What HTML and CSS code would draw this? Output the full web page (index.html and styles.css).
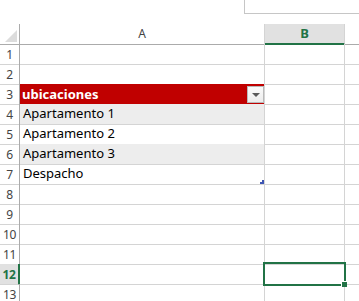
FILE: index.html
```html
<!DOCTYPE html>
<html>
<head>
<meta charset="utf-8">
<link rel="stylesheet" href="styles.css">
</head>
<body>
<div class="top">
  <div class="formula-box"></div>
</div>
<div class="sheet">
  <div class="row head-row">
    <div class="rh corner"><span class="tri"></span></div>
    <div class="ch">A</div>
    <div class="ch ch-sel">B</div>
    <div class="ch ch-last"></div>
  </div>
  <div class="row"><div class="rh">1</div><div class="c ca"></div><div class="c cb"></div><div class="c cc"></div></div>
  <div class="row"><div class="rh">2</div><div class="c ca"></div><div class="c cb"></div><div class="c cc"></div></div>
  <div class="row"><div class="rh">3</div><div class="c ca tbl-head"><span>ubicaciones</span><span class="dd"><span class="dd-arrow"></span></span></div><div class="c cb"></div><div class="c cc"></div></div>
  <div class="row"><div class="rh">4</div><div class="c ca band">Apartamento 1</div><div class="c cb"></div><div class="c cc"></div></div>
  <div class="row"><div class="rh">5</div><div class="c ca">Apartamento 2</div><div class="c cb"></div><div class="c cc"></div></div>
  <div class="row"><div class="rh">6</div><div class="c ca band">Apartamento 3</div><div class="c cb"></div><div class="c cc"></div></div>
  <div class="row"><div class="rh">7</div><div class="c ca tbl-end">Despacho<span class="resize"></span></div><div class="c cb"></div><div class="c cc"></div></div>
  <div class="row"><div class="rh">8</div><div class="c ca"></div><div class="c cb"></div><div class="c cc"></div></div>
  <div class="row"><div class="rh">9</div><div class="c ca"></div><div class="c cb"></div><div class="c cc"></div></div>
  <div class="row"><div class="rh">10</div><div class="c ca"></div><div class="c cb"></div><div class="c cc"></div></div>
  <div class="row"><div class="rh">11</div><div class="c ca"></div><div class="c cb"></div><div class="c cc"></div></div>
  <div class="row"><div class="rh rh-sel">12</div><div class="c ca"></div><div class="c cb selected"><span class="fill-handle"></span></div><div class="c cc"></div></div>
  <div class="row"><div class="rh">13</div><div class="c ca"></div><div class="c cb"></div><div class="c cc"></div></div>
</div>
</body>
</html>
```
FILE: styles.css
```css
* { box-sizing: border-box; }
html, body { margin: 0; padding: 0; background: #fff; overflow: hidden; }
body { width: 359px; height: 301px; font-family: "Noto Sans", sans-serif; }

.top { height: 24px; display: flex; justify-content: flex-end; }
.formula-box {
  width: 115px; height: 14px;
  border-left: 1px solid #c6c6c6;
  border-bottom: 1px solid #c6c6c6;
}

.sheet { display: flex; flex-direction: column; }
.row {
  display: grid;
  grid-template-columns: 20px 245px 80px 1fr;
  height: 20px;
}
.rh {
  border-right: 1px solid #ababab;
  border-bottom: 1px solid #d4d4d4;
  font-size: 12px;
  line-height: 19px;
  padding-top: 1px;
  color: #444;
  text-align: center;
  letter-spacing: -0.3px;
}
.rh-sel {
  background: #e1e1e1;
  color: #217346;
  font-weight: bold;
  border-right: 2px solid #217346;
}
.head-row .rh, .head-row .ch { border-bottom: 1px solid #ababab; }
.corner { position: relative; }
.tri {
  position: absolute; right: 2px; bottom: 2px;
  width: 0; height: 0;
  border-left: 12px solid transparent;
  border-bottom: 12px solid #dcdcdc;
}
.ch {
  border-right: 1px solid #d4d4d4;
  font-size: 12px;
  line-height: 19px;
  color: #444;
  text-align: center;
}
.ch-sel {
  background: #e1e1e1;
  color: #217346;
  font-weight: bold;
  font-size: 13px;
  border-bottom: 2px solid #217346 !important;
}
.ch-last { border-right: none; }

.c {
  border-right: 1px solid #d4d4d4;
  border-bottom: 1px solid #d4d4d4;
  font-size: 13px;
  line-height: 19px;
  color: #000;
  padding-left: 3px;
  white-space: nowrap;
}
.cc { border-right: none; }
.band { background: #ededed; }
.tbl-head {
  background: #c00000;
  border-bottom-color: #c00000;
  color: #fff;
  font-weight: bold;
  padding-left: 2px;
  display: flex;
  justify-content: space-between;
  align-items: center;
  padding-right: 0;
}
.dd {
  width: 17px; height: 17px;
  background: linear-gradient(#fbfbfb, #ececec);
  border: 1px solid #b9b9b9;
  display: flex; align-items: center; justify-content: center;
  margin-top: 1px;
}
.dd-arrow {
  width: 0; height: 0;
  border-left: 4px solid transparent;
  border-right: 4px solid transparent;
  border-top: 4px solid #595959;
}
.tbl-end { position: relative; }
.resize {
  position: absolute; right: 0; bottom: 0;
  width: 4px; height: 4px;
  background: #3f56b3;
  clip-path: polygon(50% 0, 100% 0, 100% 100%, 0 100%, 0 50%, 50% 50%);
}
.selected { position: relative; }
.selected::before {
  content: "";
  position: absolute;
  left: -2px; top: -2px; right: -2px; bottom: -2px;
  border: 2px solid #217346;
}
.fill-handle {
  position: absolute;
  right: -3px; bottom: -3px;
  width: 5px; height: 5px;
  background: #217346;
  border-left: 1px solid #fff;
  border-top: 1px solid #fff;
  box-sizing: content-box;
}
```
